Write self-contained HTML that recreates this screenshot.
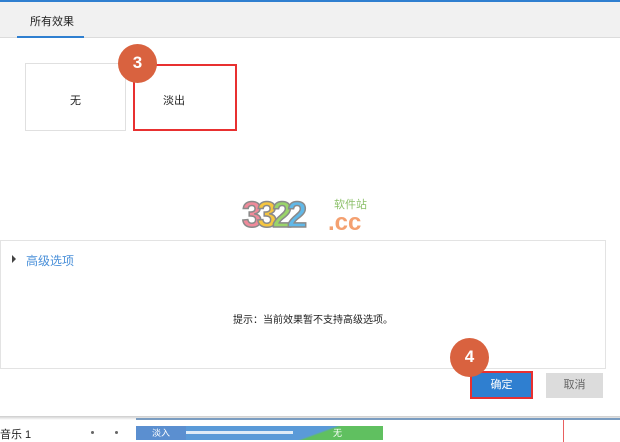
<!DOCTYPE html>
<html><head><meta charset="utf-8"><style>
*{margin:0;padding:0;box-sizing:border-box}
body{width:620px;height:442px;position:relative;background:#fff;font-family:"Liberation Sans","Noto Sans CJK SC",sans-serif;overflow:hidden;font-size:11px;color:#222}
.a{position:absolute}
.d{font-size:36px;font-weight:bold;-webkit-text-stroke:1.5px #8a8a8a;letter-spacing:-5px}
</style></head><body>
<div class="a" style="left:0;top:0;width:620px;height:2px;background:#2f7fd0"></div>
<div class="a" style="left:0;top:2px;width:620px;height:36px;background:#f1f1f1;border-bottom:1px solid #dcdcdc"></div>
<div class="a" style="left:30px;top:13px;font-size:11px">所有效果</div>
<div class="a" style="left:17px;top:36px;width:67px;height:2px;background:#2f7fd0"></div>
<div class="a" style="left:25px;top:63px;width:101px;height:68px;border:1px solid #e0e0e0"></div>
<div class="a" style="left:70px;top:92px">无</div>
<div class="a" style="left:133px;top:64px;width:104px;height:67px;border:2px solid #e83030"></div>
<div class="a" style="left:163px;top:92px">淡出</div>
<div class="a" style="left:118px;top:44px;width:39px;height:39px;border-radius:50%;background:#d9623f;color:#fff;font-weight:bold;font-size:17px;text-align:center;line-height:37px">3</div>
<div class="a" style="left:0;top:240px;width:606px;height:129px;border:1px solid #e3e3e3"></div>
<div class="a" style="left:242px;top:193px;line-height:44px;white-space:nowrap"><span class="d" style="color:#f08a9a">3</span><span class="d" style="color:#f6c640">3</span><span class="d" style="color:#9ad46a">2</span><span class="d" style="color:#60b8e8">2</span></div>
<div class="a" style="left:328px;top:209px;font-size:24px;font-weight:bold;color:#f4a070;line-height:28px">.cc</div>
<div class="a" style="left:334px;top:196px;font-size:11px;color:#8cc06a">软件站</div>
<div class="a" style="left:12px;top:255px;width:0;height:0;border-left:4px solid #444;border-top:4px solid transparent;border-bottom:4px solid transparent"></div>
<div class="a" style="left:26px;top:252px;font-size:12px;color:#4a90d9">高级选项</div>
<div class="a" style="left:233px;top:311px;font-size:10px">提示：当前效果暂不支持高级选项。</div>
<div class="a" style="left:470px;top:371px;width:63px;height:28px;border:2px solid #e83030;background:#2f7fd0;color:#fff;text-align:center;line-height:24px">确定</div>
<div class="a" style="left:546px;top:373px;width:57px;height:25px;background:#dcdcdc;color:#666;text-align:center;line-height:25px">取消</div>
<div class="a" style="left:450px;top:338px;width:39px;height:39px;border-radius:50%;background:#d9623f;color:#fff;font-weight:bold;font-size:17px;text-align:center;line-height:37px">4</div>
<div class="a" style="left:0;top:416px;width:620px;height:4px;background:linear-gradient(#ccc,#fff)"></div>
<div class="a" style="left:136px;top:418px;width:484px;height:2px;background:#7a9cc0"></div>
<div class="a" style="left:0;top:426px;font-size:11px">音乐 1</div>
<div class="a" style="left:91px;top:431px;width:3px;height:3px;border-radius:50%;background:#666"></div>
<div class="a" style="left:115px;top:431px;width:3px;height:3px;border-radius:50%;background:#666"></div>
<div class="a" style="left:136px;top:426px;width:247px;height:14px;background:linear-gradient(160deg,#5a9ad8 70%,#60c060 72%)"></div>
<div class="a" style="left:136px;top:426px;width:50px;height:14px;background:#5b8fd0;color:#fff;font-size:9px;line-height:14px;padding-left:16px">淡入</div>
<div class="a" style="left:186px;top:431px;width:107px;height:3px;background:#fff;opacity:.8"></div>
<div class="a" style="left:333px;top:426px;color:#fff;font-size:9px;line-height:14px">无</div>
<div class="a" style="left:563px;top:420px;width:1px;height:22px;background:#e86060"></div>
</body></html>
